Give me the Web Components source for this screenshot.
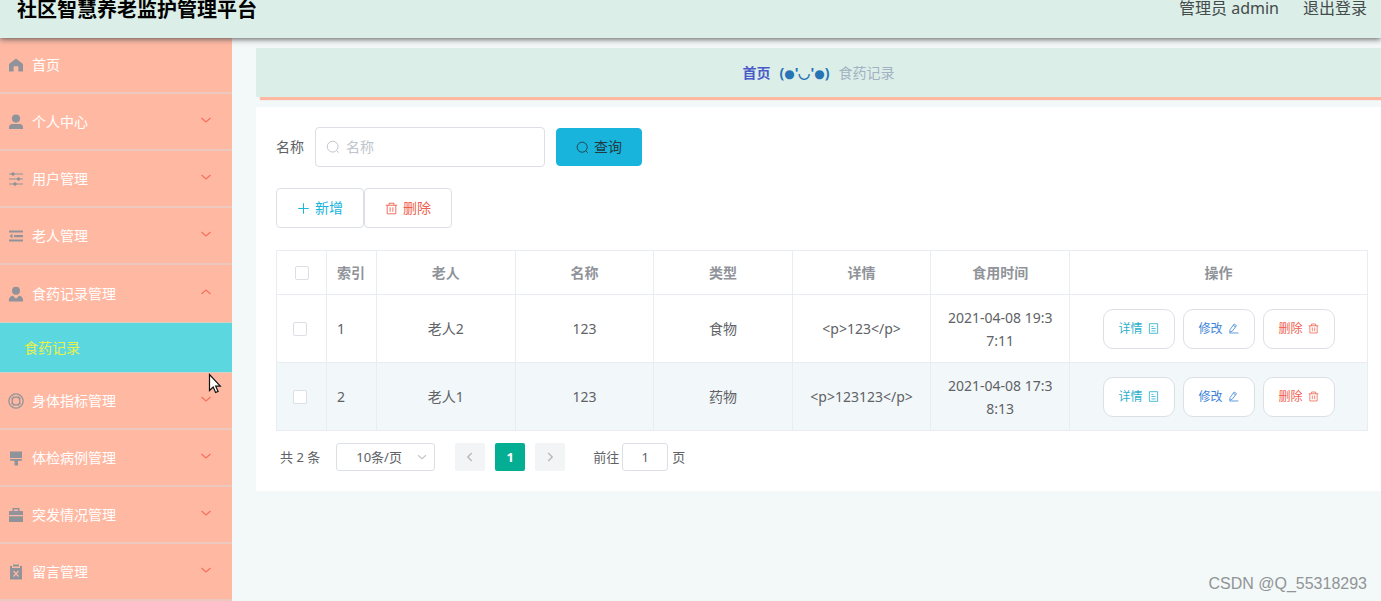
<!DOCTYPE html>
<html lang="zh-CN">
<head>
<meta charset="utf-8">
<title>社区智慧养老监护管理平台</title>
<style>
html, body { margin: 0; height: 100%; }
body { font: 14px/20px "Noto Sans", "Noto Sans CJK SC", sans-serif; color: #606266; background: #f3f8f9; overflow: hidden; }
</style>
</head>
<body>
<admin-app></admin-app>
<script>
const ICONS = {
  home: '<path fill="currentColor" d="M8 1.5 15 7v7.5h-4.6V10a.8.8 0 0 0-.8-.8H6.4a.8.8 0 0 0-.8.8v4.5H1V7z"/>',
  user: '<g fill="currentColor"><circle cx="8" cy="4.6" r="4.1"/><path d="M1 15v-1.6C1 11.300 2.300 10 4.200 10h7.600c1.900 0 3.200 1.300 3.200 3.400V15z"/></g>',
  sliders: '<g stroke="currentColor" fill="currentColor"><path d="M1 3h14M1 8h14M1 13h14"/><circle cx="5" cy="3" r="1.300"/><circle cx="10.500" cy="8" r="1.300"/><circle cx="7" cy="13" r="1.300"/></g>',
  fold: '<path fill="currentColor" d="M1 2.500h14v2H1zM6 7h9v2.200H6zM1 11.500h14v2H1zM4.500 5.800v4.600L1.500 8z"/>',
  custom: '<g fill="currentColor"><circle cx="8" cy="4.800" r="4"/><path d="M.8 15.500c0-3.600 1.200-5.200 4-5.700L8 12.800l3.200-3c2.800.5 4 2.100 4 5.700z"/></g>',
  help: '<g fill="none" stroke="currentColor" stroke-width="1.200"><circle cx="8" cy="8" r="7.200"/><rect x="4.200" y="4.200" width="7.600" height="7.600" rx="2.800"/><path d="m2.600 4.800 2.600 1M4.800 2.600l1 2.600m7.600-.4-2.600 1m.4-3.200-1 2.600M2.600 11.200l2.600-1m-.4 3.200 1-2.600m7.600.4-2.600-1m.4 3.200-1-2.600" stroke-width=".9"/></g>',
  brush: '<path fill="currentColor" d="M2 1.500h12V8H2zM2 9h12v1.500L10 11v4.500H6.500V11L2 10.500z"/>',
  briefcase: '<path fill="currentColor" fill-rule="evenodd" d="M4.500 4V1h7v3H15v4H1V4zM6 4h4V2.400H6zM1 9.200h14V15H1z"/>',
  claim: '<path fill="currentColor" d="M2 2h2v2h8V2h2v13.500H2zM5 .5h6v2H5z"/><path d="m5.500 7 5 5.500m0-5.500-5 5.500" stroke="#ffb9a3" stroke-width="1.200"/>',
  down: '<path fill="none" stroke="currentColor" stroke-width="1.200" d="m3.500 6 4.500 4 4.500-4"/>',
  up: '<path fill="none" stroke="currentColor" stroke-width="1.200" d="m3.500 10 4.500-4 4.500 4"/>',
  left: '<path fill="none" stroke="currentColor" stroke-width="1.600" d="M10 3.500 5.500 8l4.500 4.500"/>',
  right: '<path fill="none" stroke="currentColor" stroke-width="1.600" d="M6 3.500 10.500 8 6 12.500"/>',
  search: '<g fill="none" stroke="currentColor" stroke-width="1.100"><circle cx="7.600" cy="7.600" r="6.200"/><path d="m12 12 2.500 2.500"/></g>',
  plus: '<path fill="none" stroke="currentColor" stroke-width="1.200" d="M8 1.500v13M1.500 8h13"/>',
  trash: '<path fill="none" stroke="currentColor" stroke-width="1.100" d="M1 4h14M5 4V1.500h6V4M2.700 4v10.500h10.600V4M6.300 6.500V12M9.700 6.500V12"/>',
  doc: '<path fill="none" stroke="currentColor" stroke-width="1.200" d="M2 1h12v14H2zM5 5h3M5 8h6M5 11.500h6"/>',
  edit: '<path fill="none" stroke="currentColor" stroke-width="1.200" d="m3 9.500 6-8 3.300 2.300-6 8L2.500 13.500zM7.700 3.300l3.300 2.300M2 14.500h13"/>'
};

function define(name, html, setup) {
  const template = document.createElement('template');
  template.innerHTML = html;
  customElements.define(name, class extends HTMLElement {
    constructor() {
      super();
      this.attachShadow({ mode: 'open' }).append(template.content.cloneNode(true));
    }
    connectedCallback() { if (setup) setup(this, this.shadowRoot); }
  });
}

define('ui-icon', `<style>:host{display:inline-block;width:16px;height:16px;flex:none}svg{display:block;width:100%;height:100%}</style><svg viewBox="0 0 16 16" aria-hidden="true"></svg>`,
  (el, root) => { root.querySelector('svg').innerHTML = ICONS[el.getAttribute('name')] || ''; });

define('ui-button', `<style>
:host{display:inline-block}
button{display:flex;align-items:center;justify-content:center;gap:5px;box-sizing:border-box;width:100%;height:40px;padding:0 20px;margin:0;border:1px solid #dcdfe6;border-radius:4px;background:#fefffe;color:inherit;font:inherit;white-space:nowrap}
:host([kind=primary]) button{height:38px;padding:0 19px;border-color:#18b4db;background:#18b4db;color:#223a42}
:host([kind=row]) button{border-radius:10px;padding:0 15px;font-size:12px}
::slotted(ui-icon){width:13px;height:13px}
:host([kind=row]) ::slotted(ui-icon){width:11px;height:11px}
</style><button type="button"><slot></slot></button>`);

define('app-header', `<style>
:host{display:flex;justify-content:space-between;align-items:flex-start;box-sizing:border-box;height:38px;padding:0 14px 0 17px;background:#dceee8;box-shadow:0 1px 6px #555;position:relative;z-index:2}
h1{margin:0;font-size:20px;line-height:20px;color:#000}
div{display:flex;gap:24px;font-size:16px;line-height:16px;color:#444b4b}
a{color:inherit;text-decoration:none}
</style><h1>社区智慧养老监护管理平台</h1><div><span>管理员 admin</span><a href="#logout">退出登录</a></div>`);

define('nav-item', `<style>
:host{display:block}
button{display:flex;align-items:center;gap:8px;box-sizing:border-box;width:100%;height:57px;padding:0 18px 0 8px;margin:0;border:0;border-bottom:2px solid #ecc9bf;background:none;color:#fff;font:inherit;text-align:left}
:host([first]) button{height:56px}
:host([open]) button{border-bottom:0}
ui-icon{color:#909399}
span{flex:1}
.arrow{color:#f5705c;margin-bottom:4px}
</style><button type="button"><span><slot></slot></span></button>`,
  (el, root) => {
    const button = root.querySelector('button');
    const lead = document.createElement('ui-icon');
    lead.setAttribute('name', el.getAttribute('icon'));
    button.prepend(lead);
    if (el.hasAttribute('first')) return;
    const arrow = document.createElement('ui-icon');
    arrow.className = 'arrow';
    arrow.setAttribute('name', el.hasAttribute('open') ? 'up' : 'down');
    button.append(arrow);
  });

define('side-nav', `<style>
:host{display:block;width:232px;flex:none;background:#ffb9a3;overflow:hidden}
a{display:flex;align-items:center;box-sizing:border-box;height:51px;padding-left:24px;border:solid #d8d0c4;border-width:1px 0;background:#5bd8df;color:#e8f04a;text-decoration:none}
</style><nav>
<nav-item icon="home" first>首页</nav-item>
<nav-item icon="user">个人中心</nav-item>
<nav-item icon="sliders">用户管理</nav-item>
<nav-item icon="fold">老人管理</nav-item>
<nav-item icon="custom" open>食药记录管理</nav-item>
<a href="#records">食药记录</a>
<nav-item icon="help">身体指标管理</nav-item>
<nav-item icon="brush">体检病例管理</nav-item>
<nav-item icon="briefcase">突发情况管理</nav-item>
<nav-item icon="claim">留言管理</nav-item>
</nav>`);

define('page-crumbs', `<style>
:host{display:flex;justify-content:center;align-items:center;gap:9px;height:49px;background:#dceee8;box-shadow:4px 3px 1px #ffb9a3}
a{color:#4a5bc8;font-weight:700;text-decoration:none}
b{color:#2674b4}
i{font:12px/16px "DejaVu Sans",sans-serif}
span{color:#a3b1c2}
</style><a href="#home">首页</a><b>(<i>●</i>'◡'<i>●</i>)</b><span>食药记录</span>`);

define('search-bar', `<style>
:host{display:flex;flex-direction:column;gap:21px}
div{display:flex;align-items:center}
label{margin-right:11px}
.field{display:flex;align-items:center;gap:6px;box-sizing:border-box;width:230px;height:40px;padding:0 10px;margin-right:11px;border:1px solid #dcdfe6;border-radius:4px;color:#c0c4cc}
.field ui-icon{width:14px;height:14px}
input{flex:1;min-width:0;border:0;padding:0;background:none;font:inherit;color:#606266;outline:0}
input::placeholder{color:#c0c4cc;opacity:1}
.add{color:#18b4db}.del{color:#f0604d}
</style>
<div><label for="name">名称</label><span class="field"><ui-icon name="search"></ui-icon><input id="name" placeholder="名称"></span><ui-button kind="primary"><ui-icon name="search"></ui-icon>查询</ui-button></div>
<div><ui-button class="add"><ui-icon name="plus"></ui-icon>新增</ui-button><ui-button class="del"><ui-icon name="trash"></ui-icon>删除</ui-button></div>`);

define('record-table', `<style>
:host{display:block}
table{width:100%;table-layout:fixed;border-collapse:collapse}
col.narrow{width:50px}col.ops{width:298px}
th,td{box-sizing:border-box;border:1px solid #e9edf3;padding:0 10px;text-align:center;line-height:23px;overflow-wrap:anywhere}
th{height:44px;color:#909399}
td{height:68px}
th.index,td.index{text-align:left}
th.index{white-space:nowrap}
td.pick{padding:0 14px 0 10px}
tbody tr:nth-child(2){background:#f2f7f9}
input{appearance:none;display:block;width:14px;height:14px;margin:0 auto;border:1px solid #dcdfe6;border-radius:2px;background:#fefffe}
.ops div{display:flex;justify-content:center;gap:8px}
.ops ui-button{width:72px}
.view{color:#2cb0cc}.edit{color:#4285d8}.del{color:#f0604d}
</style>
<table>
<colgroup><col class="narrow"><col class="narrow"><col><col><col><col><col><col class="ops"></colgroup>
<thead><tr><th><input type="checkbox" aria-label="全选"></th><th class="index">索引</th><th>老人</th><th>名称</th><th>类型</th><th>详情</th><th>食用时间</th><th>操作</th></tr></thead>
<tbody></tbody></table>`,
  (el, root) => {
    const rows = [
      ['1', '老人2', '123', '食物', '&lt;p&gt;123&lt;/p&gt;', '2021-04-08 19:3<wbr>7:11'],
      ['2', '老人1', '123', '药物', '&lt;p&gt;123123&lt;/p&gt;', '2021-04-08 17:3<wbr>8:13']
    ];
    root.querySelector('tbody').innerHTML = rows.map(([n, ...cells]) => `<tr>
      <td class="pick"><input type="checkbox" aria-label="选择 ${n}"></td><td class="index">${n}</td>
      ${cells.map(c => `<td>${c}</td>`).join('')}
      <td class="ops"><div><ui-button kind="row" class="view">详情<ui-icon name="doc"></ui-icon></ui-button><ui-button kind="row" class="edit">修改<ui-icon name="edit"></ui-icon></ui-button><ui-button kind="row" class="del">删除<ui-icon name="trash"></ui-icon></ui-button></div></td></tr>`).join('');
  });

define('page-pager', `<style>
:host{display:flex;align-items:center;height:28px;padding-left:4px;font-size:13px}
.size{display:grid;align-items:center;width:99px;margin:0 20px 0 16px}
.size select,.size ui-icon{grid-area:1/1}
.size ui-icon{justify-self:end;width:14px;height:14px;margin-right:6px;color:#c0c4cc;pointer-events:none}
select{appearance:none;box-sizing:border-box;width:100%;height:28px;padding:0 20px 0 19px;border:1px solid #dcdfe6;border-radius:3px;background:#fefffe;color:inherit;font:inherit}
nav{display:flex;gap:10px;margin-right:28px}
button{display:flex;align-items:center;justify-content:center;width:30px;height:28px;padding:0;margin:0;border:0;border-radius:2px;background:#f3f4f5;color:#b4b8c0;font:inherit}
button ui-icon{width:14px;height:14px}
.on{background:#04ae92;color:#fff;font-weight:700}
input{box-sizing:border-box;width:46px;height:28px;margin:0 4px 0 3px;padding:0;border:1px solid #dcdfe6;border-radius:3px;background:#fefffe;color:inherit;font:inherit;text-align:center}
</style>
<span>共 2 条</span>
<span class="size"><select aria-label="每页条数"><option>10条/页</option></select><ui-icon name="down"></ui-icon></span>
<nav><button type="button" aria-label="上一页"><ui-icon name="left"></ui-icon></button><button type="button" class="on">1</button><button type="button" aria-label="下一页"><ui-icon name="right"></ui-icon></button></nav>
<label for="page">前往</label><input id="page" value="1"><label for="page">页</label>`);

define('content-card', `<style>
:host{display:block;margin-top:10px;padding:20px 13px 20px 20px;background:#fefffe}
record-table{margin:22px 0 12px}
</style><search-bar></search-bar><record-table></record-table><page-pager></page-pager>`);

define('mouse-pointer', `<style>:host{position:absolute;left:208px;top:373px;z-index:3;pointer-events:none}svg{display:block}</style>
<svg width="14" height="21" viewBox="0 0 14 21"><path d="M1.500 1.500v16l3.700-3.500 2.400 5.500 2.500-1.100-2.400-5.200h4.600z" fill="#fff" stroke="#111" stroke-width="1.200"/></svg>`);

define('water-mark', `<style>:host{position:absolute;right:14px;bottom:7px;font:16px/20px "Liberation Sans",sans-serif;color:#909496}</style>CSDN @Q_55318293`);

define('admin-app', `<style>
:host{display:flex;flex-direction:column;height:100vh;position:relative;overflow:hidden}
.body{display:flex;flex:1;min-height:0}
main{flex:1;min-width:0;padding:10px 0 0 24px}
</style><app-header></app-header><div class="body"><side-nav></side-nav><main><page-crumbs></page-crumbs><content-card></content-card></main></div><mouse-pointer></mouse-pointer><water-mark></water-mark>`);
</script>
</body>
</html>
